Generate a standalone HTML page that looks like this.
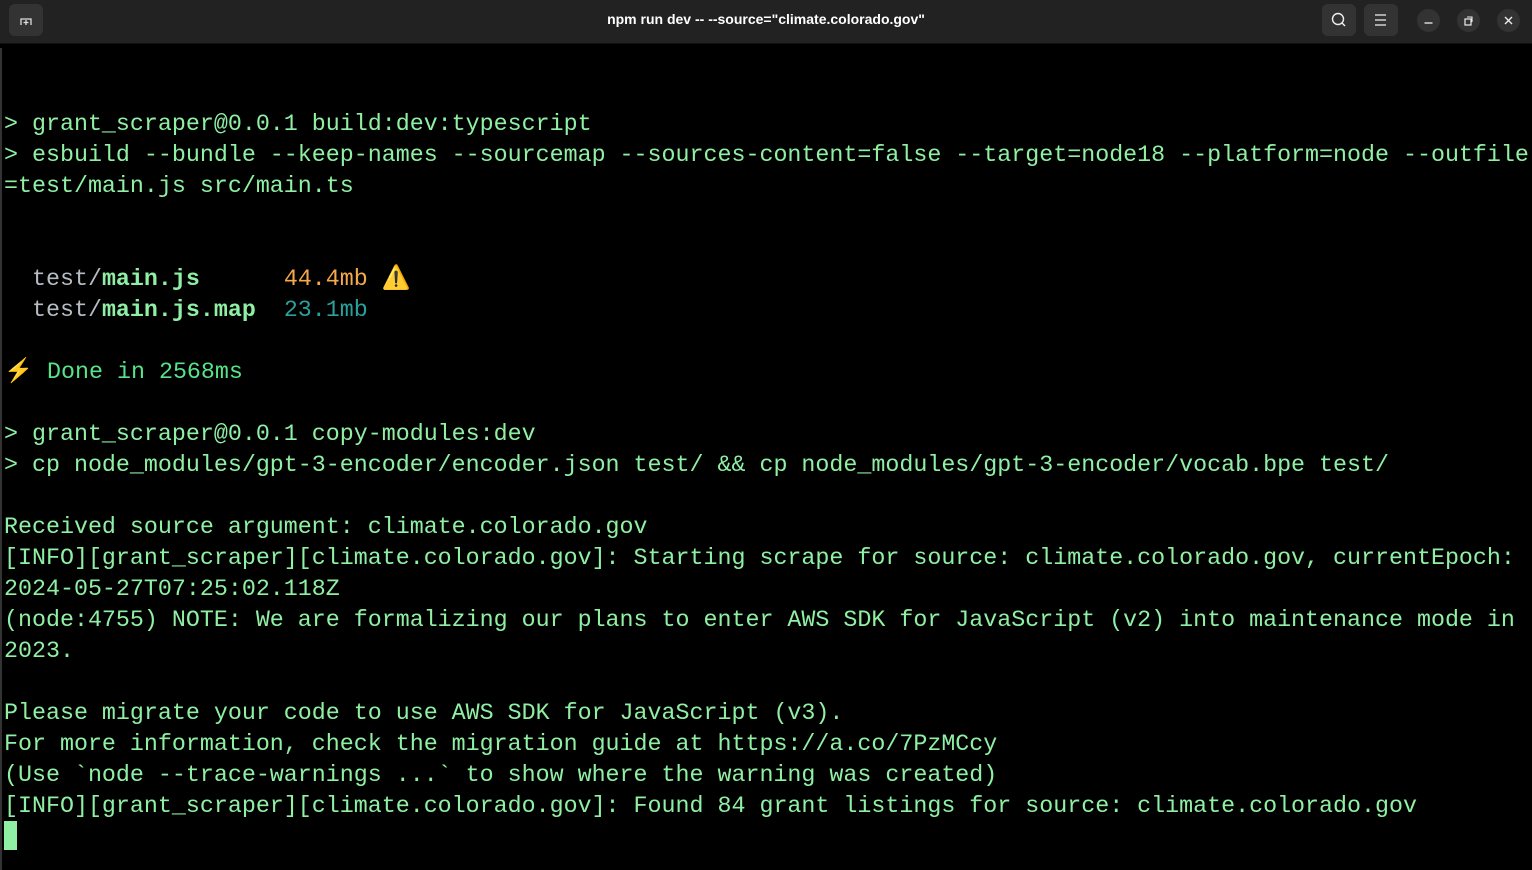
<!DOCTYPE html>
<html><head><meta charset="utf-8"><style>
html,body{margin:0;padding:0;background:#000;width:1532px;height:870px;overflow:hidden}
.tb{position:absolute;left:0;top:0;width:1532px;height:43px;background:#222;border-bottom:1px solid #111}
.title{position:absolute;left:0;right:0;top:11px;text-align:center;color:#fff;font:bold 14px "Liberation Sans",sans-serif}
.btn{position:absolute;top:4px;width:34px;height:32px;background:#333;border-radius:6px}
.circ{position:absolute;top:9px;width:23px;height:23px;background:#333;border-radius:50%}
.term{position:absolute;left:0;top:48px;width:1532px;font-family:"Liberation Mono",monospace;font-size:23.32px;color:#8ff0a4;border-left:2px solid #333;height:822px}
.l{height:31px;line-height:31px;white-space:pre;padding-left:2px}
.g{color:#b5bcc4}.b{font-weight:bold}.o{color:#f5a94a}.t{color:#2aa19b}.d{color:#57e389}
.cur{position:absolute;left:4px;top:821px;width:13px;height:29px;background:#8ff0a4}
</style></head><body>
<div class="tb">
<div class="btn" style="left:9px"><svg width="34" height="32" viewBox="0 0 34 32"><path d="M12 21V15h10v6M17 16v5M14.5 18.5h5" stroke="#ddd" stroke-width="1.3" fill="none"/></svg></div>
<div class="title">npm run dev -- --source="climate.colorado.gov"</div>
<div class="btn" style="left:1322px"><svg width="34" height="32"><circle cx="16" cy="15" r="5.5" stroke="#eee" stroke-width="1.4" fill="none"/><path d="M20 19l3 3" stroke="#eee" stroke-width="1.4"/></svg></div>
<div class="btn" style="left:1364px"><svg width="34" height="32"><path d="M11 11h11M11 16h11M11 21h11" stroke="#eee" stroke-width="1.3"/></svg></div>
<div class="circ" style="left:1417px"><svg width="23" height="23"><path d="M7.5 14h8" stroke="#eee" stroke-width="1.3"/></svg></div>
<div class="circ" style="left:1457px"><svg width="23" height="23"><rect x="8" y="10" width="6" height="6" stroke="#eee" fill="none" stroke-width="1.2"/><path d="M10 8h5v5" stroke="#eee" fill="none" stroke-width="1.1"/></svg></div>
<div class="circ" style="left:1497px"><svg width="23" height="23"><path d="M8 8l7 7M15 8l-7 7" stroke="#eee" stroke-width="1.4"/></svg></div>
</div>
<div class="term">
<div class="l"> </div><div class="l"> </div>
<div class="l">&gt; grant_scraper@0.0.1 build:dev:typescript</div>
<div class="l">&gt; esbuild --bundle --keep-names --sourcemap --sources-content=false --target=node18 --platform=node --outfile</div>
<div class="l">=test/main.js src/main.ts</div>
<div class="l"> </div><div class="l"> </div>
<div class="l">  <span class="g">test/</span><span class="b">main.js</span>      <span class="o">44.4mb ⚠️</span></div>
<div class="l">  <span class="g">test/</span><span class="b">main.js.map</span>  <span class="t">23.1mb</span></div>
<div class="l"> </div>
<div class="l"><span style="color:#f5c211">⚡</span> <span class="d">Done in 2568ms</span></div>
<div class="l"> </div>
<div class="l">&gt; grant_scraper@0.0.1 copy-modules:dev</div>
<div class="l">&gt; cp node_modules/gpt-3-encoder/encoder.json test/ &amp;&amp; cp node_modules/gpt-3-encoder/vocab.bpe test/</div>
<div class="l"> </div>
<div class="l">Received source argument: climate.colorado.gov</div>
<div class="l">[INFO][grant_scraper][climate.colorado.gov]: Starting scrape for source: climate.colorado.gov, currentEpoch:</div>
<div class="l">2024-05-27T07:25:02.118Z</div>
<div class="l">(node:4755) NOTE: We are formalizing our plans to enter AWS SDK for JavaScript (v2) into maintenance mode in</div>
<div class="l">2023.</div>
<div class="l"> </div>
<div class="l">Please migrate your code to use AWS SDK for JavaScript (v3).</div>
<div class="l">For more information, check the migration guide at https://a.co/7PzMCcy</div>
<div class="l">(Use `node --trace-warnings ...` to show where the warning was created)</div>
<div class="l">[INFO][grant_scraper][climate.colorado.gov]: Found 84 grant listings for source: climate.colorado.gov</div>
</div>
<div class="cur"></div>
</body></html>
